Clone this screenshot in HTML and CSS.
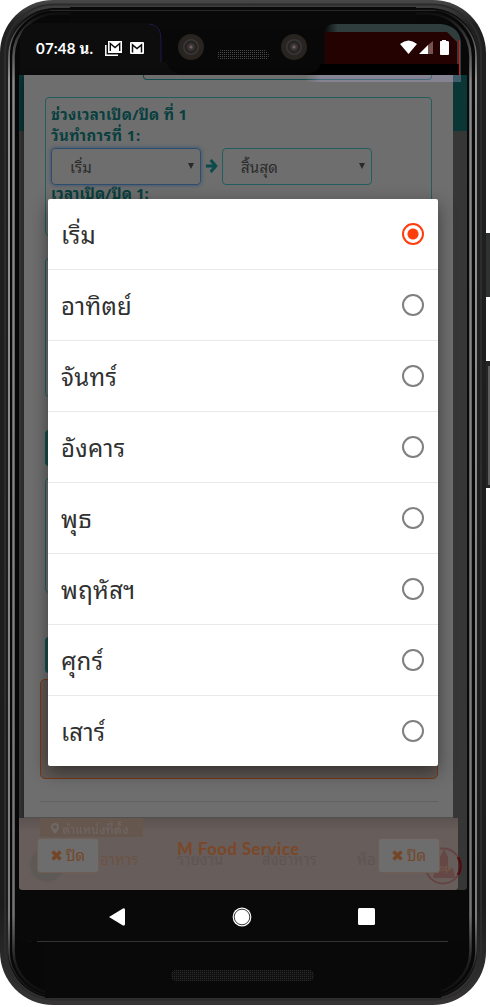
FILE: index.html
```html
<!DOCTYPE html>
<html lang="th">
<head>
<meta charset="utf-8">
<title>M Food Service</title>
<link rel="stylesheet" href="styles.css">
</head>
<body>
<div class="phone">
<svg class="frame" viewBox="0 0 490 1007" width="490" height="1007" fill="none">
<defs>
<linearGradient id="rim" x1="0" x2="0" y1="0" y2="1"><stop offset="0" stop-color="#484848"/><stop offset=".025" stop-color="#202020"/><stop offset=".9" stop-color="#1c1c1c"/><stop offset="1" stop-color="#363434"/></linearGradient>
<linearGradient id="shine" x1="0" x2="0" y1="0" y2="1"><stop offset="0" stop-color="#111"/><stop offset=".03" stop-color="#555"/><stop offset=".07" stop-color="#b5b5b5"/><stop offset=".5" stop-color="#aaa"/><stop offset=".92" stop-color="#999"/><stop offset=".97" stop-color="#222"/><stop offset="1" stop-color="#111"/></linearGradient>
<linearGradient id="panel" x1="0" x2="1"><stop offset="0" stop-color="#2f3d3d" stop-opacity="0"/><stop offset=".1" stop-color="#2f3d3d"/></linearGradient>
<pattern id="mesh" width="2" height="2" patternUnits="userSpaceOnUse"><path fill="#080808" d="M0 0h2v2H0z"/><path fill="#494949" d="M0 0h1v1H0z"/></pattern>
<pattern id="mesh2" width="2" height="2" patternUnits="userSpaceOnUse"><path fill="#101010" d="M0 0h2v2H0z"/><path fill="#2b2b2b" d="M0 0h1v1H0z"/></pattern>
<radialGradient id="lens"><stop offset="0" stop-color="#857a74"/><stop offset=".15" stop-color="#443b38"/><stop offset=".42" stop-color="#202020"/><stop offset=".55" stop-color="#3d3a37"/><stop offset=".64" stop-color="#292522"/><stop offset="1" stop-color="#28231e"/></radialGradient>
</defs>
<path fill="#303232" d="M485 233h5v64h-5z"/><path fill="#252525" d="M485 361h5v127h-5z"/><path stroke="#999" d="M489 366v119"/>
<rect width="486" height="1005" rx="53" fill="url(#rim)"/>
<rect x="5" y="4.500" width="476" height="995" rx="49" stroke="#2c2c2c" stroke-width="2"/>
<rect x="8" y="8" width="469" height="990" rx="47" fill="#080808"/>
<rect x="9" y="10" width="467" height="986" rx="46" stroke="url(#shine)" stroke-width="1.600"/>
<rect x="13.500" y="13.500" width="457" height="980" rx="43" stroke="url(#shine)" stroke-width="2.500" stroke-opacity=".75"/>
<path fill="#090909" d="M70 7h346v20H70zM45 942h396v56H45z"/>
<path stroke="#282828" d="M50 10.500h386"/>
<path fill="#0d0d0d" d="M20 75V40q2-17 18-17h108q15 2 15 18v21h5q5 13 22 13z"/>
<path stroke="#1e1b48" d="M149 24c9 1 12 6 12 17v21"/>
<path fill="url(#panel)" d="M324 32q2-8 10-8h107q18 2 20 18v40H324z"/><path fill="#240202" d="M325 32h122l10 10v22H325z"/><path fill="#000" d="M320 64h139v11H300q20-1 20-11z"/><path stroke="#d51b1b" d="M459.500 40v42"/>
<circle cx="191" cy="47" r="13" fill="url(#lens)"/><circle cx="294" cy="47" r="13" fill="url(#lens)"/>
<rect x="217" y="50" width="52" height="10" rx="5" fill="url(#mesh)"/>
<path stroke="#333" d="M20 929l10 12.500M37 941.500h411"/>
<rect x="171" y="970" width="143" height="11" rx="5" fill="url(#mesh2)"/>
</svg>
<header class="status">
<div class="status-left"><span class="time">07:48 น.</span>
<svg width="17" height="15" viewBox="0 0 17 15" fill="none" stroke="#fff" stroke-width="1.500"><path d="M.8 4v10.200H13"/><path fill="#fff" stroke="none" d="M3 0h14v12H3z"/><path stroke="#0b0b0b" stroke-width="1.400" d="M5.300 10V2.500L10 6.500l4.700-4V10"/></svg>
<svg class="mail" width="14" height="12" viewBox="0 0 14 12"><rect width="14" height="12" rx="1" fill="#fff"/><path fill="none" stroke="#0b0b0b" stroke-width="1.500" d="M2.500 10.500V2.800L7 6.500l4.500-3.700v7.700"/></svg>
</div>
<svg width="50" height="16" viewBox="0 0 50 16" fill="#fff"><path d="M0 4Q8.500-3 17 4L8.500 14z"/><path d="M28 5v9h-9z"/><path fill="#775454" d="M28 5l5-4v13h-5z"/><path d="M40 2q0-1 1-1h1V0h4v1h1q2 0 2 1v12q0 1-1 1h-7q-1 0-1-1z"/></svg>
</header>
<main class="screen">
<div class="side side-left"></div>
<div class="page">
<div class="previous"></div>
<section class="period">
<h2>ช่วงเวลาเปิด/ปิด ที่ 1</h2><h2>วันทำการที่ 1:</h2>
<div class="range"><div class="select focused">เริ่ม<i></i></div>
<svg width="13" height="14" viewBox="0 0 15 14" preserveAspectRatio="none" fill="none" stroke="#0b4b4b" stroke-width="3.200"><path d="M1 7h11M6.500 1l6 6-6 6"/></svg>
<div class="select">สิ้นสุด<i></i></div></div>
<h2 class="hours">เวลาเปิด/ปิด 1:</h2>
</section>
<section class="box second"></section>
<div class="bar"></div>
<section class="box third"></section>
<div class="bar lower"></div>
<section class="notice"></section>
<hr>
</div>
<div class="side side-right"></div>
<div class="glare"></div>
</main>
<footer class="footer">
<svg class="shop" width="40" height="40" viewBox="0 0 40 40" fill="none"><circle cx="20" cy="20" r="17.500" stroke="#654443" stroke-width="2"/><path d="M35 11a17.500 17.500 0 0 1 0 18" stroke="#520b0e" stroke-width="2.500"/><path fill="#654846" d="M10 32l2-10 5 2V11l4-8 4 8v13l5-2 2 10z"/><text x="16" y="25" class="shop-word">op</text></svg>
<div class="halo"></div>
<div class="ghost-title"><svg width="8" height="11" viewBox="0 0 8 11"><path fill="#716866" fill-rule="evenodd" d="M4 0a4 4 0 0 0-4 4c0 3 4 7 4 7s4-4 4-7a4 4 0 0 0-4-4zm0 2a2 2 0 1 1 0 4 2 2 0 0 1 0-4z"/></svg> ตำแหน่งที่ตั้ง</div>
<div class="ghosts"><span>อาหาร</span><span>รายงาน</span><span>ส่งอาหาร</span><span>ห้อ</span></div>
<div class="actions"><div class="close"><svg width="11" height="11" viewBox="0 0 11 11" stroke="#744628" stroke-width="3.500"><path d="M1.500 1.500l8 8m0-8l-8 8"/></svg><span>ปิด</span></div>
<strong>M Food Service</strong>
<div class="close"><svg width="11" height="11" viewBox="0 0 11 11" stroke="#744628" stroke-width="3.500"><path d="M1.500 1.500l8 8m0-8l-8 8"/></svg><span>ปิด</span></div></div>
</footer>
<nav class="nav">
<svg width="16" height="18" viewBox="0 0 16 18"><path fill="#fff" d="M0 9L14 .5Q16-.5 16 2v14q0 2-2 1.500z"/></svg>
<svg width="20" height="20" viewBox="0 0 20 20"><circle cx="10" cy="10" r="9.400" fill="#fff"/><circle cx="10" cy="10" r="7.800" fill="none" stroke="#222" stroke-width=".9"/></svg>
<svg width="17" height="17" viewBox="0 0 17 17"><rect width="17" height="17" rx="1.500" fill="#fff"/></svg>
</nav>
<div class="dialog" role="listbox">
<div class="option"><span>เริ่ม</span><b class="radio checked"></b></div>
<div class="option"><span>อาทิตย์</span><b class="radio"></b></div>
<div class="option"><span>จันทร์</span><b class="radio"></b></div>
<div class="option"><span>อังคาร</span><b class="radio"></b></div>
<div class="option"><span>พุธ</span><b class="radio"></b></div>
<div class="option"><span>พฤหัสฯ</span><b class="radio"></b></div>
<div class="option"><span>ศุกร์</span><b class="radio"></b></div>
<div class="option"><span>เสาร์</span><b class="radio"></b></div>
</div>
</div>
</body>
</html>
```
FILE: styles.css
```css
* { box-sizing: border-box; }
body { margin: 0; background: #fff; font-family: "Noto Sans", "Noto Sans Thai Looped", "Noto Looped Thai", "Loma", "Noto Serif Thai", "Waree", "Garuda", sans-serif; overflow: hidden; }
.phone { position: relative; width: 490px; height: 1007px; padding: 25px 23px 65px 19px; display: flex; flex-direction: column; }
.frame { position: absolute; left: 0; top: 0; }
.status, .screen, .footer, .nav { position: relative; flex: none; }
.status { height: 50px; display: flex; justify-content: space-between; padding: 15px 17px 0 17px; color: #fff; }
.status-left { display: flex; height: 16px; align-items: center; }
.time { font: 700 15px/17px Lato, "Noto Sans Thai Looped", "Loma", "Noto Serif Thai", sans-serif; width: 69px; white-space: nowrap; letter-spacing: .2px; }
.mail { margin-left: 8px; }
.screen { height: 743px; display: flex; background: #6e6e6e; }
.glare { position: absolute; left: 286px; right: 6px; top: 0; height: 7px; background: linear-gradient(90deg, transparent, #b9b3e34d 16px); }
.side { background: linear-gradient(#0a3636 0 56px, #363636 56px); flex: none; }
.side-left { width: 5px; }
.side-right { width: 14px; }
.page { width: 429px; padding: 0 15px 0 21px; border-bottom: 1px solid #505050; overflow: hidden; box-shadow: 0 3px 7px #0008; }
.previous { margin-left: 98px; width: 289px; height: 5px; border: 1px solid #125050; border-top: 0; border-radius: 0 0 4px 4px; }
.period { margin-top: 17px; height: 139px; width: 387px; border: 1px solid #205f5e; border-radius: 4px; padding: 5px 5px; }
h2 { margin: 0; font-size: 15px; line-height: 22px; color: #083f3f; font-weight: 700; white-space: nowrap; letter-spacing: .3px; }
h2 + h2 { line-height: 21px; height: 22px; letter-spacing: .5px; }
.hours { margin-top: -1px; line-height: 19px; letter-spacing: .1px; }
.range { display: flex; align-items: center; height: 38px; gap: 4px; }
.select { position: relative; width: 150px; height: 37px; border: 1px solid #205f5e; border-radius: 4px; padding: 0 18px; font-size: 15px; line-height: 36px; color: #2b2b2b; letter-spacing: .2px; }
.focused { border-color: #2b4d70; box-shadow: 0 0 4px #37516e; }
.select i { position: absolute; right: 6px; top: 14px; border: 3px solid transparent; border-top: 6px solid #292929; border-bottom: 0; }
.box { margin-top: 22px; height: 139px; width: 387px; border: 1px solid #205f5e; border-radius: 4px; }
.bar { margin-top: 33px; height: 36px; background: #174e4c; border-radius: 4px; }
.third { margin-top: 12px; height: 115px; }
.lower { margin-top: 44px; }
.notice { margin: 6px 0 0 -5px; height: 100px; width: 398px; border: 1.5px solid #7a3815; border-radius: 5px; background: #605955; }
hr { margin: 22px 0 0 -5px; width: 398px; border: 0; border-top: 1px solid #626262; }
.footer { height: 72px; width: 439px; background: linear-gradient(#5c5350, #675d5a 14px); border-radius: 0 0 3px 3px; box-shadow: 9px 0 #363636; }
.halo { position: absolute; left: 12px; top: 31px; width: 32px; height: 32px; border-radius: 50%; background: #5d5957; box-shadow: 0 0 3px #5d5957; }
.ghost-title { margin-left: 21px; width: 103px; height: 19px; padding: 3px 11px 0; background: #65564e; font-size: 12px; line-height: 17px; white-space: nowrap; color: #716866; overflow: hidden; letter-spacing: .4px; }
.ghosts { height: 48px; display: flex; padding-left: 81px; font-size: 15px; line-height: 44px; color: #5e5552; }
.ghosts span { width: 77px; }
.ghosts span:nth-child(3) { margin-left: 8px; width: 95px; }
.ghosts span:nth-child(1) { color: #6b5345; }
.actions { position: absolute; inset: 20px 18px auto; display: flex; justify-content: space-between; }
.close { width: 62px; height: 35px; background: #6d6d6d; border: 1px solid #705e54; border-radius: 3px; display: flex; align-items: center; justify-content: center; gap: 4px; color: #744628; font-size: 15px; }
.close span { padding-bottom: 4px; }
.actions strong { color: #7c4726; font: 700 16.500px/22px Lato, sans-serif; letter-spacing: .6px; }
.shop { position: absolute; left: 404px; top: 28px; }
.shop-word { fill: #715846; font: 700 10px Lato, sans-serif; }
.nav { height: 51px; background: #090909; display: flex; justify-content: space-between; align-items: center; padding: 2px 92px 0 90px; }
.dialog { position: absolute; left: 48px; top: 199px; width: 390px; height: 567px; background: #fff; border-radius: 2px; box-shadow: 0 6px 18px #0007; overflow: hidden; }
.option { height: 71px; border-bottom: 1px solid #e9e9e9; display: flex; justify-content: space-between; align-items: center; padding: 0 14px 0 13px; font-size: 24px; color: #303030; }
.option span { padding-bottom: 2px; letter-spacing: .3px; }
.radio { width: 22px; height: 22px; border: 2px solid #808080; border-radius: 50%; }
.checked { border-color: #ff3d0d; background: radial-gradient(circle, #ff3d0d 5px, #fff 6px); }
```
